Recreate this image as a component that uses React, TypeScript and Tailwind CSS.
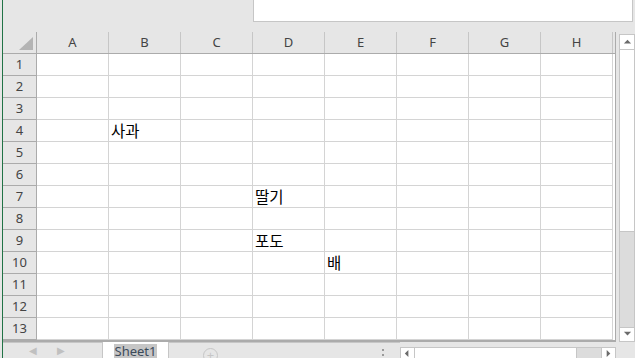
import React from "react";

const cols = ["A", "B", "C", "D", "E", "F", "G", "H"];
const rows = Array.from({ length: 13 }, (_, i) => i + 1);

// cell values, keyed by column + row
const cells: Record<string, string> = {
  B4: "사과",
  D7: "딸기",
  D9: "포도",
  E10: "배",
};

const ui = { fontFamily: '"Noto Sans", "Liberation Sans", sans-serif' };
const kr = { fontFamily: '"Noto Sans CJK KR", "Noto Sans", sans-serif' };

const Triangle = ({ dir }: { dir: "up" | "down" | "left" | "right" }) => {
  const pts = {
    up: "1,6 5,2 9,6",
    down: "1,2 5,6 9,2",
    left: "6,1 2,5 6,9",
    right: "3,1 7,5 3,9",
  }[dir];
  return (
    <svg width="9" height="9" viewBox="0 0 10 10">
      <polygon points={pts} fill="#6b6b6b" />
    </svg>
  );
};

const App = () => {
  return (
    <div className="flex h-[358px] w-[635px] overflow-hidden bg-[#e6e6e6]" style={ui}>
      {/* left green edge */}
      <div className="h-full w-[3px] border-r border-[#217346]" />

      <div className="flex flex-1 flex-col">
        {/* formula area */}
        <div className="flex h-[32px] shrink-0">
          <div className="w-[250px]" />
          <div className="h-[22px] w-[380px] border-b border-l border-r border-[#c6c6c6] bg-white" />
        </div>

        <div className="flex h-[310px] shrink-0">
          {/* sheet */}
          <div className="flex w-[613px] flex-col border-b-2 border-r border-[#ababab]">
            {/* column headers */}
            <div className="flex h-[22px] shrink-0 border-b border-[#ababab] text-[13px] text-[#444]">
              <div className="relative w-[34px] border-r border-[#ababab]">
                <svg className="absolute left-[16px] top-[5px]" width="14" height="13" viewBox="0 0 14 13">
                  <polygon points="14,0 14,13 0,13" fill="#b4b4b4" />
                </svg>
              </div>
              {cols.map((c) => (
                <div
                  key={c}
                  className="flex w-[72px] items-center justify-center border-r border-[#c6c6c6]"
                >
                  {c}
                </div>
              ))}
              <div className="flex-1" />
            </div>

            {/* rows */}
            {rows.map((r) => (
              <div key={r} className="flex h-[22px] shrink-0">
                <div className="flex w-[34px] items-center justify-center border-b border-r border-[#ababab] text-[13px] text-[#444]">
                  {r}
                </div>
                {cols.map((c) => (
                  <div
                    key={c}
                    className="flex w-[72px] items-center border-b border-r border-[#d4d4d4] bg-white pl-[2px] text-[15.5px] text-black"
                    style={kr}
                  >
                    {cells[c + r]}
                  </div>
                ))}
                <div className="flex-1 bg-white" />
              </div>
            ))}
            <div className="flex-1 bg-white" />
          </div>

          {/* vertical scrollbar */}
          <div className="ml-[3px] mt-[2px] flex w-[16px] flex-col border border-[#c6c6c6] bg-[#dcdcdc]">
            <div className="flex h-[15px] items-center justify-center border-b border-[#c6c6c6] bg-white">
              <Triangle dir="up" />
            </div>
            <div className="h-[182px] border-b border-[#c6c6c6] bg-white" />
            <div className="flex-1" />
            <div className="flex h-[14px] items-center justify-center border-t border-[#c6c6c6] bg-white">
              <Triangle dir="down" />
            </div>
          </div>
        </div>

        {/* sheet tabs */}
        <div className="flex flex-1 items-stretch">
          <div className="flex w-[100px] items-end justify-center gap-[20px] border-r border-t border-[#c6c6c6] pb-[1px] pr-[12px] text-[10px] text-[#c0c0c0]">
            <span>◀</span>
            <span>▶</span>
          </div>
          <div className="flex w-[65px] items-end justify-center bg-white">
            <span className="bg-[#c6c6c6] px-[1px] text-[13px] leading-[15px] text-[#3b4a5a]">Sheet1</span>
          </div>
          <div className="relative flex w-[232px] border-l border-t border-[#c6c6c6]">
            <div className="absolute left-[34px] top-[5px] flex h-[15px] w-[15px] items-center justify-center rounded-full border border-[#c6c6c6] text-[13px] leading-none text-[#c6c6c6]">
              +
            </div>
            <div className="absolute left-[213px] top-[6px] flex flex-col gap-[3px]">
              <div className="h-[2px] w-[2px] bg-[#9a9a9a]" />
              <div className="h-[2px] w-[2px] bg-[#9a9a9a]" />
            </div>
          </div>
          {/* horizontal scrollbar */}
          <div className="mt-[5px] flex w-[216px] border border-b-0 border-[#c6c6c6] bg-[#dcdcdc]">
            <div className="flex w-[14px] items-center justify-center border-r border-[#c6c6c6] bg-white">
              <Triangle dir="left" />
            </div>
            <div className="w-[162px] border-r border-[#c6c6c6] bg-white" />
            <div className="flex-1" />
            <div className="flex w-[14px] items-center justify-center border-l border-[#c6c6c6] bg-white">
              <Triangle dir="right" />
            </div>
          </div>
        </div>
      </div>
    </div>
  );
};

export default App;
